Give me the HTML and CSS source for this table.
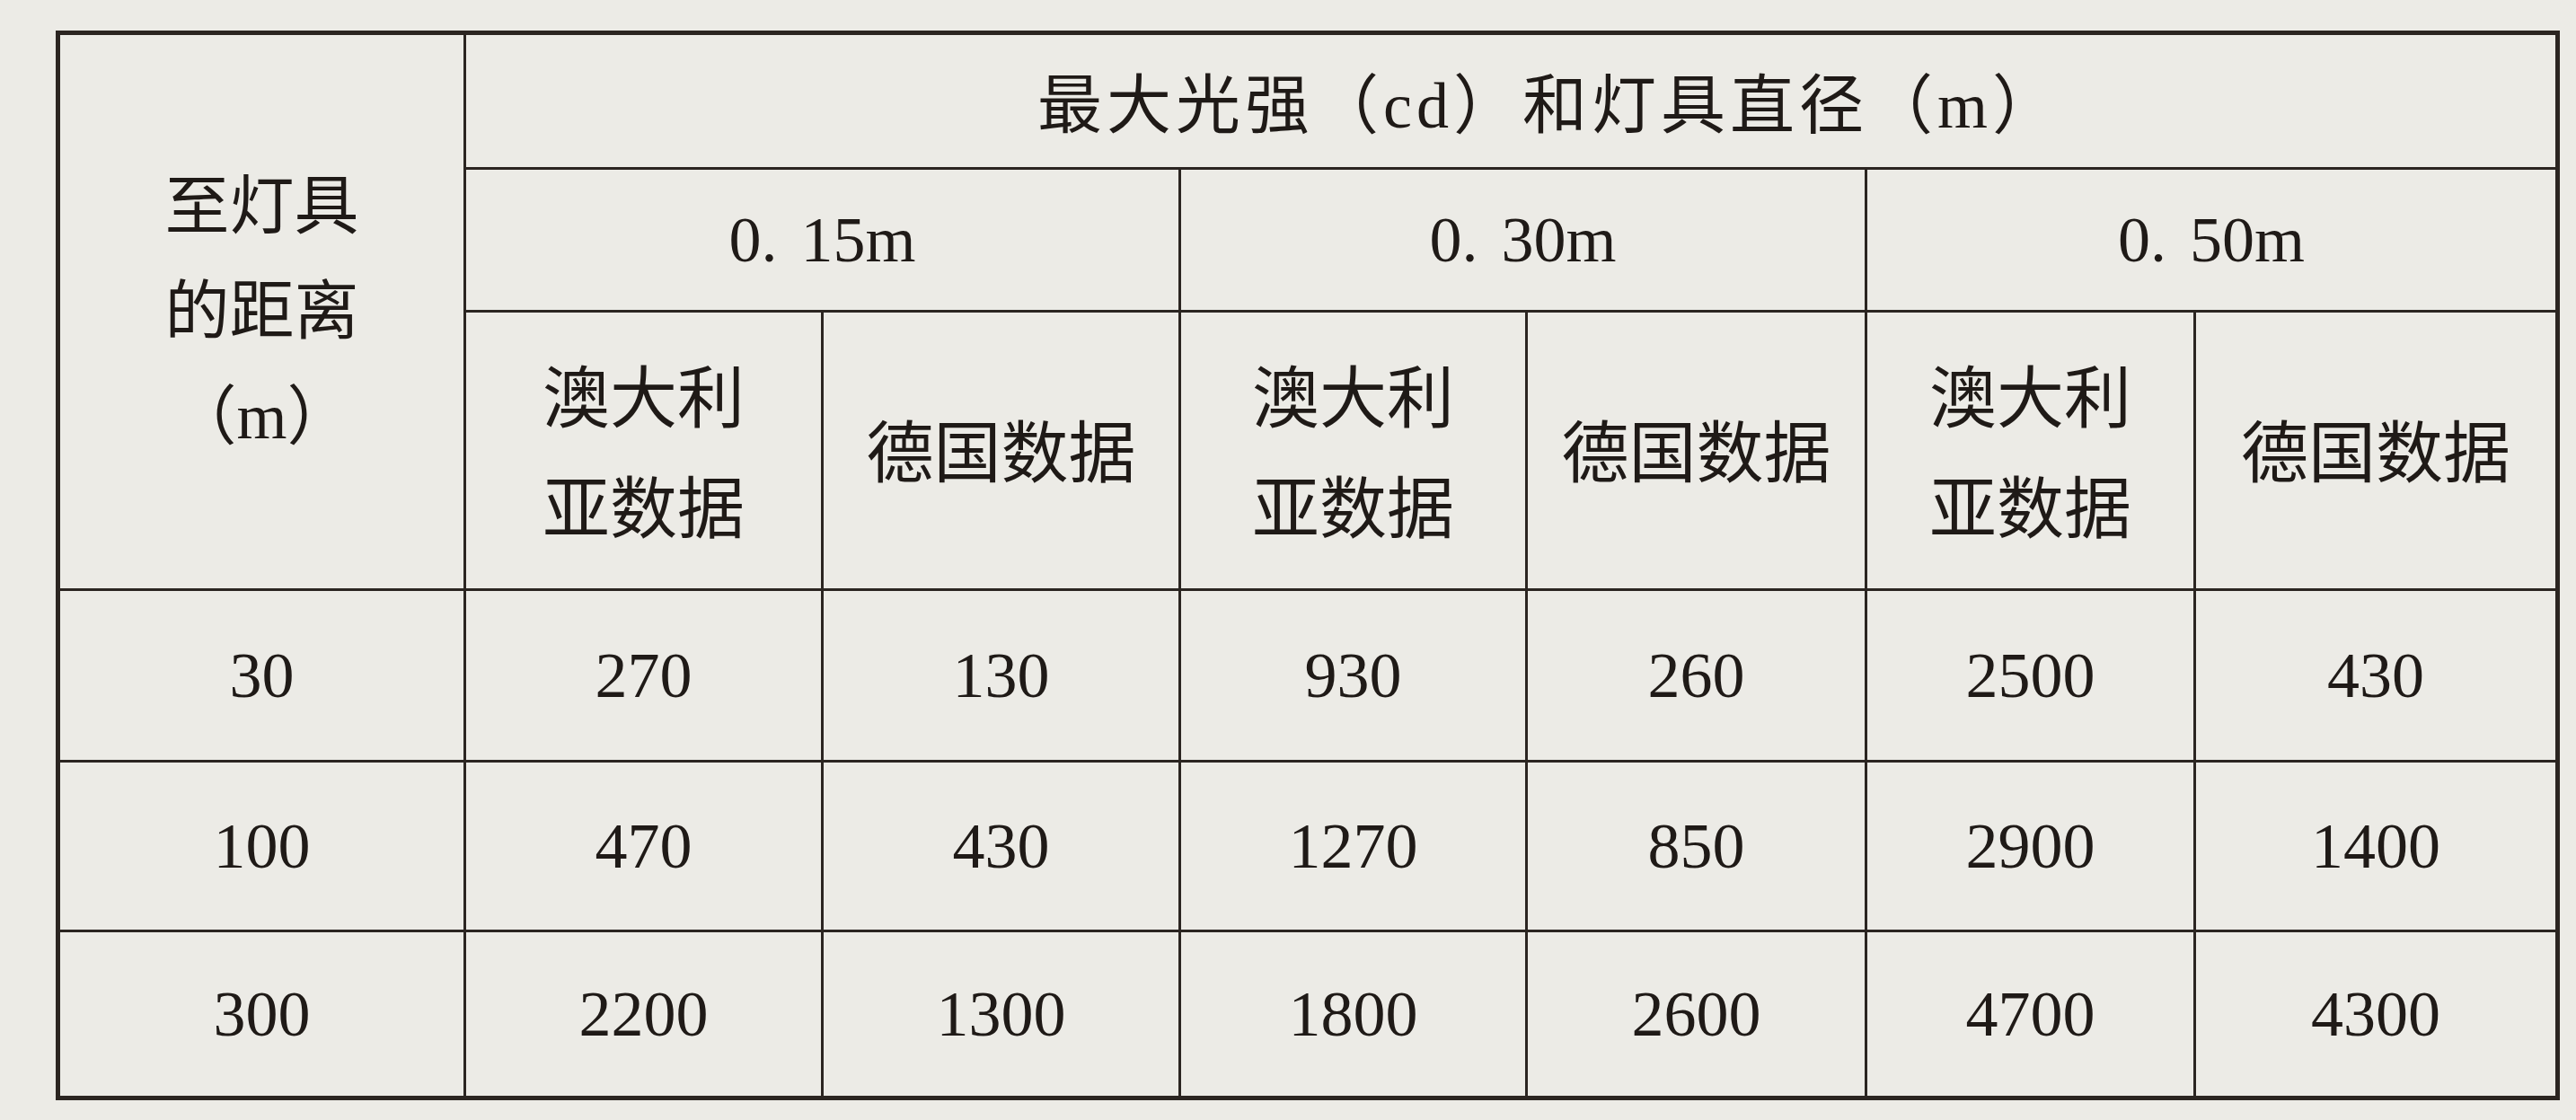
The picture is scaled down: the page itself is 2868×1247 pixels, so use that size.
FILE: index.html
```html
<!DOCTYPE html>
<html lang="zh-CN">
<head>
<meta charset="utf-8">
<title>最大光强和灯具直径</title>
<link rel="stylesheet" href="styles.css">
</head>
<body>
<table class="grid">
  <colgroup>
    <col class="c-dist">
    <col class="c-a1">
    <col class="c-b1">
    <col class="c-a2">
    <col class="c-b2">
    <col class="c-a3">
    <col class="c-b3">
  </colgroup>
  <thead>
    <tr class="row-title">
      <th rowspan="3" class="dist">至灯具<br>的距离<br>（m）</th>
      <th colspan="6" class="title">最大光强（cd）和灯具直径（m）</th>
    </tr>
    <tr class="row-size">
      <th colspan="2">0.<span class="gap"></span>15m</th>
      <th colspan="2">0.<span class="gap"></span>30m</th>
      <th colspan="2">0.<span class="gap"></span>50m</th>
    </tr>
    <tr class="row-src">
      <th>澳大利<br>亚数据</th>
      <th>德国数据</th>
      <th>澳大利<br>亚数据</th>
      <th>德国数据</th>
      <th>澳大利<br>亚数据</th>
      <th>德国数据</th>
    </tr>
  </thead>
  <tbody>
    <tr class="row-a">
      <td>30</td><td>270</td><td>130</td><td>930</td><td>260</td><td>2500</td><td>430</td>
    </tr>
    <tr class="row-b">
      <td>100</td><td>470</td><td>430</td><td>1270</td><td>850</td><td>2900</td><td>1400</td>
    </tr>
    <tr class="row-c">
      <td>300</td><td>2200</td><td>1300</td><td>1800</td><td>2600</td><td>4700</td><td>4300</td>
    </tr>
  </tbody>
</table>
</body>
</html>
```

FILE: styles.css
```css
html, body {
  margin: 0;
  padding: 0;
}

body {
  background: #ecebe6;
  padding: 34px 0 0 62px;
  font-family: "Liberation Serif", "Noto Sans CJK SC", serif;
  color: #1f1a17;
}

.grid {
  border-collapse: collapse;
  table-layout: fixed;
  width: 2787px;
  border: 5px solid #2b2521;
}

.c-dist { width: 453px; }
.c-a1 { width: 398px; }
.c-b1 { width: 398px; }
.c-a2 { width: 386px; }
.c-b2 { width: 378px; }
.c-a3 { width: 366px; }
.c-b3 { width: 404px; }

.grid th,
.grid td {
  border: 3px solid #2b2521;
  padding: 0;
  text-align: center;
  vertical-align: middle;
  font-weight: 400;
  font-size: 72px;
  line-height: 1.2;
}

.grid .dist {
  line-height: 117px;
}

.row-title { height: 151px; }
.row-size { height: 159px; }
.row-src { height: 310px; }
.row-a { height: 191px; }
.row-b { height: 189px; }
.row-c { height: 186px; }

.grid .row-src th {
  font-size: 75px;
  line-height: 123px;
  padding-top: 8px;
}

.grid .title {
  padding: 12px 0 0 86px;
  letter-spacing: 5px;
}

.gap {
  display: inline-block;
  width: 26px;
}
```
